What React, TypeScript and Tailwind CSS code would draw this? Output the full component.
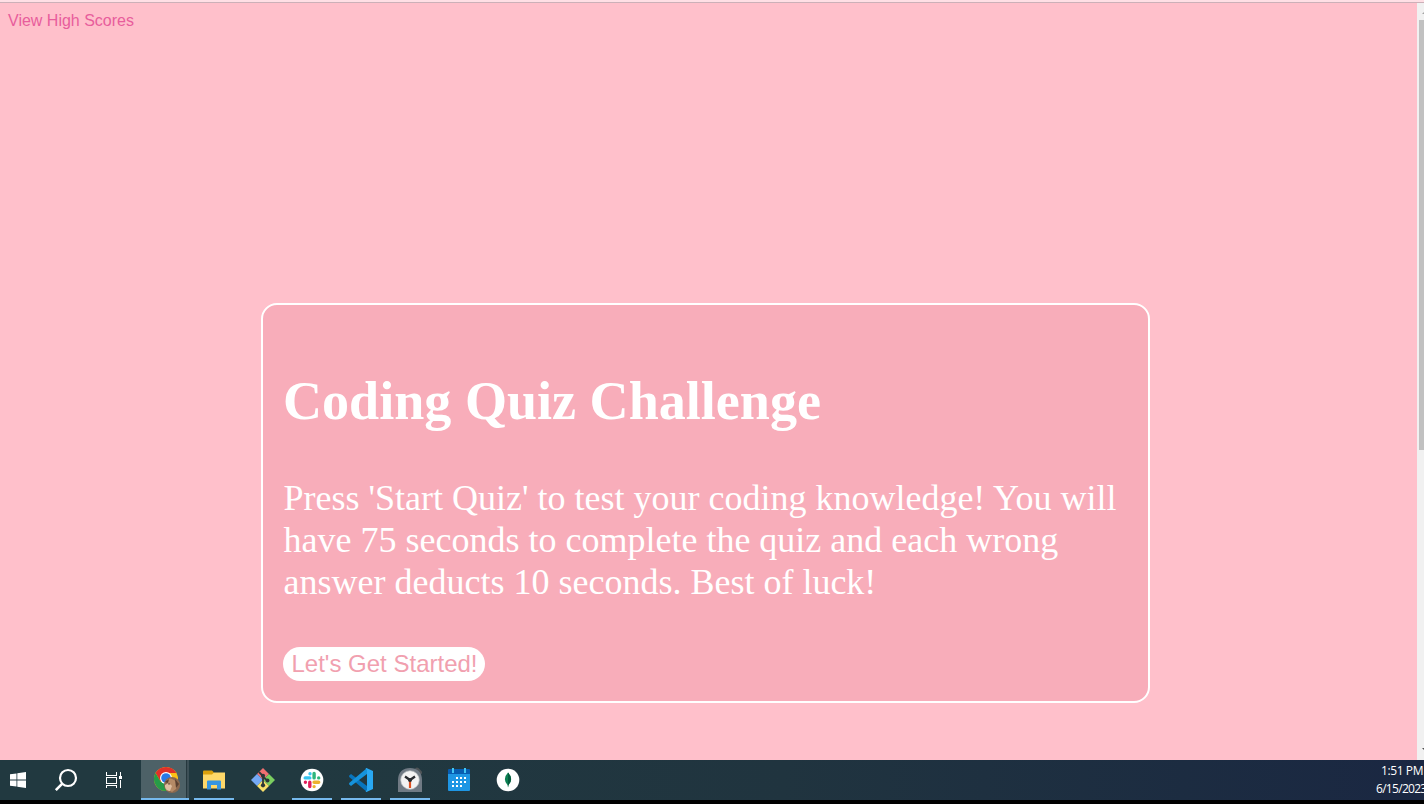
import type { ReactNode } from "react";

function WindowsIcon() {
  return (
    <svg width="16" height="16" viewBox="0 0 16 16" fill="#fff">
      <path d="M0 2.3 6.5 1.4V7.5H0zM7.3 1.2 16 0V7.5H7.3zM0 8.4H6.5V14.6L0 13.7zM7.3 8.4H16V16L7.3 14.8z" />
    </svg>
  );
}

function SearchIcon() {
  return (
    <svg width="24" height="24" viewBox="0 0 24 24" fill="none" stroke="#fff">
      <circle cx="14" cy="10" r="8" strokeWidth="2.2" />
      <path d="M8.3 15.7 1.8 22.2" strokeWidth="2.6" />
    </svg>
  );
}

function TaskViewIcon() {
  return (
    <svg width="18" height="16" viewBox="0 0 18 16" fill="none" stroke="#fff" strokeWidth="1" shapeRendering="crispEdges">
      <path d="M1.5 0V3.5H11.5V0M1.5 16V13.5H11.5V16M1.5 5.5H11.5V11.5H1.5zM15.5 0V4M15.5 8V16" />
      <path d="M14 4H17V7H14z" fill="#fff" stroke="none" />
    </svg>
  );
}

function ChromeIcon() {
  return (
    <svg width="28" height="28" viewBox="0 0 28 28">
      <circle cx="13" cy="13" r="12" fill="#fbc116" />
      <path d="M2.6 7A12 12 0 0 1 23.4 7H13L7.8 16z" fill="#df3029" />
      <path d="M2.6 7A12 12 0 0 0 13 25L18.2 16H7.8z" fill="#269b48" />
      <circle cx="13" cy="12" r="6" fill="#fff" />
      <circle cx="13" cy="12" r="4.8" fill="#2879e8" />
      <circle cx="19" cy="19" r="8" fill="#8b684e" />
      <path d="M14 14q3-3 7 0l4 3-2 6-4 3-5-3z" fill="#b58a66" />
      <path d="M12 19q4-3 7 1l-2 5q-4 0-5-4z" fill="#dfbea0" />
      <path d="M12 16l4-3-1 4zM22 13l4 5-3 4z" fill="#5b4030" />
      <circle cx="16" cy="18" r=".7" fill="#3e2a20" />
    </svg>
  );
}

function FolderIcon() {
  return (
    <svg width="24" height="20" viewBox="0 0 24 20">
      <path d="M1 1.5Q1 .5 2 .5H10L12 2.5V6H1z" fill="#dca00c" />
      <path d="M1 4.5H10L12 2.5H23V18.5H1z" fill="#ffd869" />
      <path d="M5 11.5Q5 10.5 6 10.5H18Q19 10.5 19 11.5V19.5H15V15H9V19.5H5z" fill="#3695e2" />
    </svg>
  );
}

function GitIcon() {
  return (
    <svg width="26" height="26" viewBox="0 0 26 26">
      <path d="M13 1 19 7 13 13 7 7z" fill="#f07070" />
      <path d="M19 7 25 13 19 19 13 13z" fill="#7bce60" />
      <path d="M7 7 13 13 7 19 1 13z" fill="#75a9f5" />
      <path d="M13 13 19 19 13 25 7 19z" fill="#f8df6a" />
      <path d="M9 5 13 9V19M13 10 18 14" stroke="#2c3638" strokeWidth="1.8" fill="none" />
      <g fill="#2c3638"><circle cx="13" cy="8.8" r="2.1" /><circle cx="17.5" cy="13.4" r="2" /><circle cx="13" cy="18.3" r="2.1" /></g>
    </svg>
  );
}

function SlackIcon() {
  return (
    <svg width="24" height="24" viewBox="0 0 24 24">
      <circle cx="12" cy="12" r="11.3" fill="#fff" />
      <g strokeWidth="3.4" strokeLinecap="round" fill="none">
        <path d="M10 5.7V5.7M5.2 9.9H9.8" stroke="#36c5f0" />
        <path d="M14.1 5.4V9.9M18.7 9.9V9.9" stroke="#2eb67d" />
        <path d="M18.7 14.2H14.1M14.1 18.6V18.6" stroke="#ecb22e" />
        <path d="M9.8 18.6V14.2M5.4 14.2V14.2" stroke="#e01e5a" />
      </g>
    </svg>
  );
}

function CodeIcon() {
  return (
    <svg width="26" height="26" viewBox="0 0 26 26">
      <path d="M1 8.7 3 7 19 19V25L1.2 10z" fill="#0875bd" />
      <path d="M1 17.3 3 19 19 7V1L1.2 16z" fill="#1593dc" />
      <path d="M18.5 1 25 4V22L18.5 25 17.5 24.5 19 23V3L17.5 1.5z" fill="#29a8f2" />
    </svg>
  );
}

function ClockIcon() {
  return (
    <svg width="26" height="26" viewBox="0 0 26 26">
      <path d="M20 2.5 23 5.5" stroke="#4d5356" strokeWidth="4" strokeLinecap="round" />
      <path d="M1 25V13C1 5 6 1 13 1S25 5 25 13V25z" fill="#707a84" />
      <circle cx="13" cy="13" r="9.3" fill="#f3f3f3" stroke="#b5babd" strokeWidth=".7" />
      <path d="M8 9.5 13 13 18 9.5" stroke="#292c30" strokeWidth="2.3" fill="none" />
      <path d="M13 13V21" stroke="#df5020" strokeWidth="2.2" />
      <circle cx="13" cy="13" r="2" fill="#292c30" />
    </svg>
  );
}

function CalendarIcon() {
  return (
    <svg width="22" height="23" viewBox="0 0 22 23">
      <path d="M0 5H22V22Q22 23 21 23H1Q0 23 0 22z" fill="#1e96e4" />
      <path d="M1 1H21Q22 1 22 2V6H0V2Q0 1 1 1z" fill="#075db1" />
      <path d="M4 0H6V5H4zM16 0H18V5H16z" fill="#42c6f4" />
      <path d="M8 9h2v2H8zm4 0h2v2h-2zm4 0h2v2h-2zM4 13h2v2H4zm4 0h2v2H8zm4 0h2v2h-2zm4 0h2v2h-2zM4 17h2v2H4zm4 0h2v2H8zm4 0h2v2h-2z" fill="#fff" />
    </svg>
  );
}

function LeafIcon() {
  return (
    <svg width="24" height="24" viewBox="0 0 24 24">
      <circle cx="12" cy="12" r="11.3" fill="#fff" />
      <path d="M12 4.5Q6 11 11.5 17L12 19.5 12.5 17Q18 11 12 4.5z" fill="#0b8052" />
      <path d="M12 6V19.5L12.5 17Q18 11 12 4.5z" fill="#045c3e" />
    </svg>
  );
}

function TaskbarApp({ children, open = false }: { children: ReactNode; open?: boolean }) {
  return (
    <div className="flex h-10 w-[49px] flex-col items-center">
      <div className="flex h-[38px] items-center pt-px">{children}</div>
      {open && <div className="h-[2px] w-10 bg-[#76b9ed]" />}
    </div>
  );
}

function Taskbar() {
  return (
    <footer className="flex h-10 shrink-0 overflow-hidden bg-linear-to-r from-[#213940] from-20% via-[#20343f] via-55% to-[#1a2742]">
      <div className="flex h-10 w-9 items-center justify-center"><WindowsIcon /></div>
      <div className="flex h-10 w-[60px] items-center justify-center"><SearchIcon /></div>
      <div className="flex h-10 w-[36px] items-center justify-center"><TaskViewIcon /></div>
      <div className="ml-[9px] flex h-10 w-12 border-b-2 border-[#76b9ed]">
        <div className="flex w-[45px] items-center justify-center bg-[#4d6167] pl-[6px] pt-[2px]"><ChromeIcon /></div>
        <div className="w-[3px] border-l border-[#26383e] bg-[#3d5057]" />
      </div>
      <div className="flex">
        <TaskbarApp open><FolderIcon /></TaskbarApp>
        <TaskbarApp><GitIcon /></TaskbarApp>
        <TaskbarApp open><SlackIcon /></TaskbarApp>
        <TaskbarApp open><CodeIcon /></TaskbarApp>
        <TaskbarApp open><ClockIcon /></TaskbarApp>
        <TaskbarApp><CalendarIcon /></TaskbarApp>
        <TaskbarApp><LeafIcon /></TaskbarApp>
      </div>
      <div className="ml-auto flex w-12 shrink-0 flex-col pt-[2px] font-['Open_Sans',sans-serif] text-[12px] leading-[18px] whitespace-nowrap text-white">
        <span className="pl-[5px] tracking-[-0.4px]">1:51 PM</span>
        <span className="tracking-[-0.7px]">6/15/2023</span>
      </div>
    </footer>
  );
}

export default function App() {
  return (
    <div className="flex h-[804px] w-[1424px] flex-col overflow-hidden bg-black">
      <div className="h-[3px] shrink-0 border-b border-[#ccb0b8] bg-[#ffdfe5]" />
      <div className="flex h-[757px] shrink-0">
        <main className="flex w-[1417px] flex-col bg-[#ffc0cb]">
          <a href="#scores" className="ml-2 mt-[9px] w-fit font-['Liberation_Sans',sans-serif] text-[16px] leading-[18px] text-[#e85d9c]">View High Scores</a>
          <section className="ml-[261px] mt-[273px] h-[400px] w-[889px] rounded-[16px] border-2 border-white bg-[#f8adba] px-5 font-['Liberation_Serif',serif] text-white">
            <h1 className="mt-[65px] text-[54.1px] leading-[62px] font-bold whitespace-nowrap">Coding Quiz Challenge</h1>
            <p className="mt-[45px] pl-[0.5px] text-[36px] leading-[42px] whitespace-nowrap">
              Press 'Start Quiz' to test your coding knowledge! You will<br />
              have 75 seconds to complete the quiz and each wrong<br />
              answer deducts 10 seconds. Best of luck!
            </p>
            <button className="mt-[44px] flex h-[34px] w-[202px] items-center justify-center rounded-[17px] bg-white pl-px font-['Liberation_Sans',sans-serif] text-[24px] leading-[28px] whitespace-nowrap text-[#f1a0af]">Let's Get Started!</button>
          </section>
        </main>
        <aside className="flex w-[7px] flex-col overflow-hidden bg-[#f1f1f1]">
          <svg className="ml-[5px] mt-[7px] shrink-0" width="8" height="4"><path d="M0 4 4 0 8 4z" fill="#a3a3a3" /></svg>
          <div className="ml-[2px] mt-[6px] h-[430px] w-[13px] shrink-0 bg-[#c1c1c1]" />
          <svg className="ml-[5px] mt-auto mb-[8px] shrink-0" width="8" height="4"><path d="M0 0 4 4 8 0z" fill="#505050" /></svg>
        </aside>
      </div>
      <Taskbar />
      <div className="h-1 shrink-0 bg-black" />
    </div>
  );
}
